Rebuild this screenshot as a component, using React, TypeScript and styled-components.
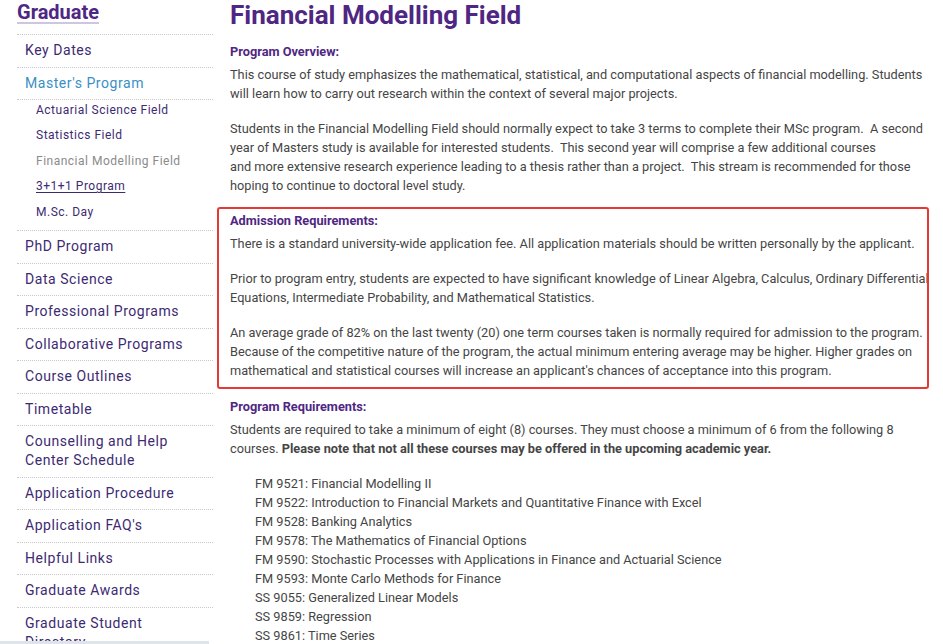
import React from 'react'
import styled, { createGlobalStyle } from 'styled-components'

const GlobalStyle = createGlobalStyle`
  html, body {
    margin: 0;
    padding: 0;
    background: #fff;
  }
  body {
    font-family: Roboto, 'Liberation Sans', Arial, sans-serif;
    overflow: hidden;
  }
`

const Page = styled.div`
  display: flex;
  align-items: flex-start;
  gap: 17px;
  padding-left: 17px;
  width: 943px;
  height: 644px;
  box-sizing: border-box;
  overflow: hidden;
`

const Sidebar = styled.nav`
  flex: 0 0 196px;
  width: 196px;
`

const SideTitle = styled.a`
  display: block;
  height: 34px;
  font-size: 20px;
  line-height: 24px;
  font-weight: 700;
  color: #4f2683;
  text-decoration: underline;
  text-decoration-color: #cfc6dd;
  text-underline-offset: 3px;
`

const NavList = styled.ul`
  list-style: none;
  margin: 0;
  padding: 0;
`

const NavItem = styled.li<{ tone?: 'active' }>`
  border-top: 1px dotted #c9c9c9;
  padding: 6px 8px 6.5px;
  font-size: 14px;
  line-height: 19px;
  letter-spacing: 0.55px;
  color: ${({ tone }) => (tone === 'active' ? '#3a8fc4' : '#3d2a72')};
`

const SubList = styled.ul`
  list-style: none;
  margin: 0;
  padding: 0 0 2.5px;
  border-top: 1px dotted #c9c9c9;
`

const SubItem = styled.li<{ tone?: 'current' | 'link' }>`
  padding: 1.5px 0 7px 19px;
  font-size: 12px;
  line-height: 17px;
  letter-spacing: 0.5px;
  color: ${({ tone }) => (tone === 'current' ? '#8a8a8a' : '#3d2a72')};
  text-decoration: ${({ tone }) => (tone === 'link' ? 'underline' : 'none')};
  text-underline-offset: 2px;
`

const Main = styled.main`
  flex: 0 0 710px;
  width: 710px;
  color: #454545;
  font-size: 12.75px;
  line-height: 19px;
`

const Title = styled.h1`
  margin: 0;
  font-size: 26px;
  line-height: 31px;
  font-weight: 700;
  color: #4f2683;
`

const SectionHead = styled.h2<{ first?: boolean }>`
  margin: ${({ first }) => (first ? '10.5px' : '16px')} 0 4px;
  font-size: 12.75px;
  line-height: 19px;
  font-weight: 700;
  color: #4f2683;
`

const Para = styled.p`
  margin: 0 0 16px;
`

const Highlight = styled.section`
  position: relative;
  margin-top: 16px;
  padding-bottom: 1px;

  & > h2 {
    margin-top: 0;
  }

  &::after {
    content: '';
    position: absolute;
    top: -3.5px;
    left: -13px;
    right: 11px;
    bottom: -8px;
    border: 2px solid #e53a34;
    border-radius: 3px;
    pointer-events: none;
  }

  & > p:last-child {
    margin-bottom: 0;
  }
`

const CourseList = styled.ul`
  list-style: none;
  margin: 0;
  padding: 0 0 0 25px;
`

const ScrollTrack = styled.div`
  position: fixed;
  left: 0;
  bottom: 0;
  width: 209px;
  height: 3px;
  background: #dfe3ea;
`

const mainNav = [
  'PhD Program',
  'Data Science',
  'Professional Programs',
  'Collaborative Programs',
  'Course Outlines',
  'Timetable',
  'Counselling and Help Center Schedule',
  'Application Procedure',
  "Application FAQ's",
  'Helpful Links',
  'Graduate Awards',
  'Graduate Student Directory',
]

const courses = [
  'FM 9521: Financial Modelling II',
  'FM 9522: Introduction to Financial Markets and Quantitative Finance with Excel',
  'FM 9528: Banking Analytics',
  'FM 9578: The Mathematics of Financial Options',
  'FM 9590: Stochastic Processes with Applications in Finance and Actuarial Science',
  'FM 9593: Monte Carlo Methods for Finance',
  'SS 9055: Generalized Linear Models',
  'SS 9859: Regression',
  'SS 9861: Time Series',
]

export default function App() {
  return (
    <>
      <GlobalStyle />
      <Page>
        <Sidebar>
          <SideTitle>Graduate</SideTitle>
          <NavList>
            <NavItem>Key Dates</NavItem>
            <NavItem tone="active">Master's Program</NavItem>
            <SubList>
              <SubItem>Actuarial Science Field</SubItem>
              <SubItem>Statistics Field</SubItem>
              <SubItem tone="current">Financial Modelling Field</SubItem>
              <SubItem tone="link">3+1+1 Program</SubItem>
              <SubItem>M.Sc. Day</SubItem>
            </SubList>
            {mainNav.map((label) => (
              <NavItem key={label}>{label}</NavItem>
            ))}
          </NavList>
        </Sidebar>

        <Main>
          <Title>Financial Modelling Field</Title>

          <SectionHead first>Program Overview:</SectionHead>
          <Para>
            This course of study emphasizes the mathematical, statistical, and computational aspects of
            financial modelling. Students will learn how to carry out research within the context of
            several major projects.
          </Para>
          <Para>
            Students in the Financial Modelling Field should normally expect to take 3 terms to complete
            their MSc program.&nbsp; A second year of Masters study is available for interested
            students.&nbsp; This second year will comprise a few additional courses
            <br />
            and more extensive research experience leading to a thesis rather than a project.&nbsp; This
            stream is recommended for those hoping to continue to doctoral level study.
          </Para>

          <Highlight>
            <SectionHead>Admission Requirements:</SectionHead>
            <Para>
              There is a standard university-wide application fee. All application materials should be
              written personally by the applicant.
            </Para>
            <Para>
              Prior to program entry, students are expected to have significant knowledge of Linear
              Algebra, Calculus, Ordinary Differential Equations, Intermediate Probability, and
              Mathematical Statistics.
            </Para>
            <Para>
              An average grade of 82% on the last twenty (20) one term courses taken is normally required
              for admission to the program. Because of the competitive nature of the program, the actual
              minimum entering average may be higher. Higher grades on mathematical and statistical
              courses will increase an applicant's chances of acceptance into this program.
            </Para>
          </Highlight>

          <SectionHead>Program Requirements:</SectionHead>
          <Para>
            Students are required to take a minimum of eight (8) courses. They must choose a minimum of 6
            from the following 8 courses.{' '}
            <strong>Please note that not all these courses may be offered in the upcoming academic year.</strong>
          </Para>
          <CourseList>
            {courses.map((c) => (
              <li key={c}>{c}</li>
            ))}
          </CourseList>
        </Main>
      </Page>
      <ScrollTrack />
    </>
  )
}
